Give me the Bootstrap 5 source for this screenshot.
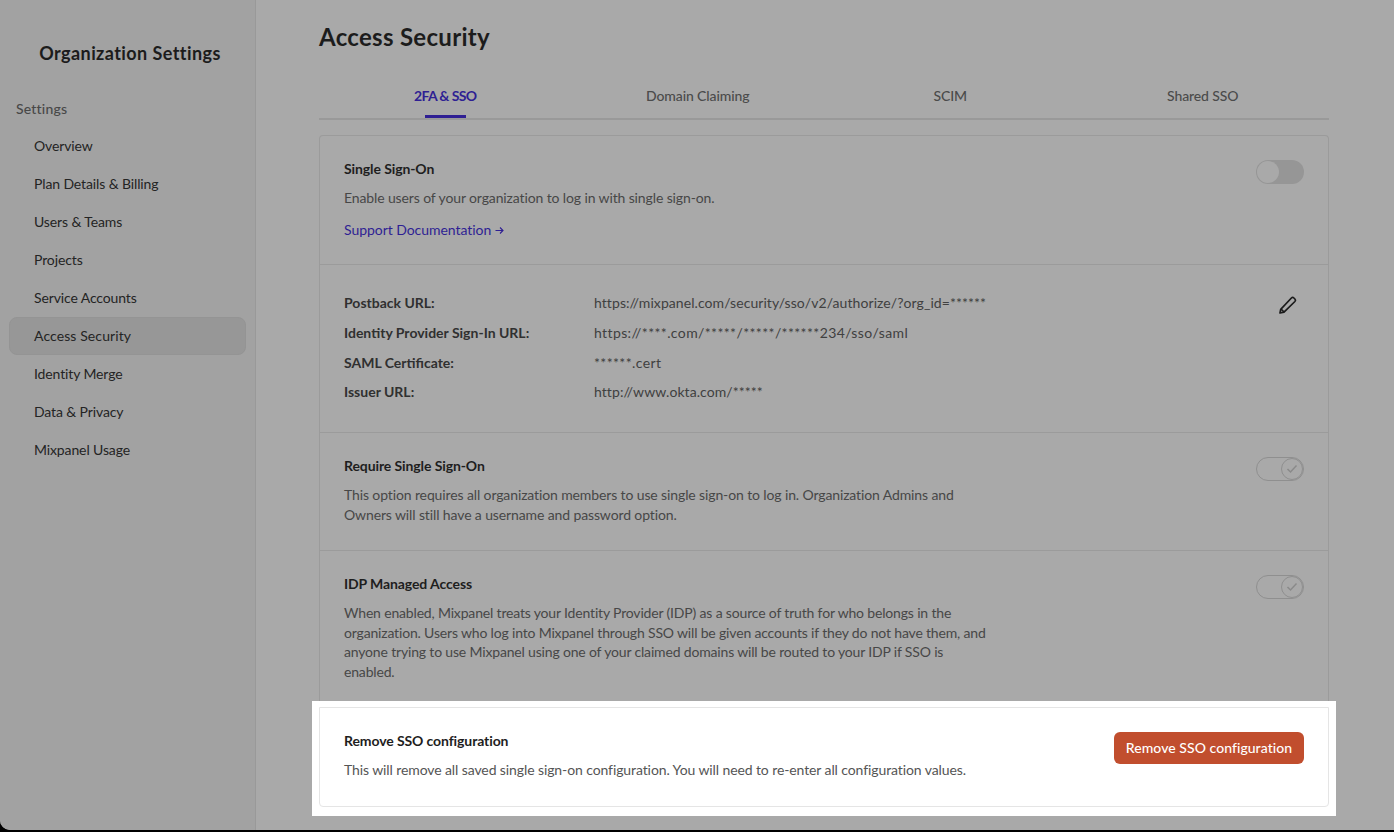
<!DOCTYPE html>
<html lang="en"><head><meta charset="utf-8"><title>Access Security</title>
<link href="https://cdn.jsdelivr.net/npm/bootstrap@5.3.0/dist/css/bootstrap.min.css" rel="stylesheet">
<style>
html,body{height:100%;overflow:hidden;background:#000}
body{font-family:"Lato","Noto Sans",sans-serif;font-size:14px;color:#1b1b1b}
.shell{height:830px;background:#a9a9a9;border-bottom-left-radius:10px;overflow:hidden}
.side{width:256px;flex:none;background:#a2a2a2;border-right:1px solid #999;padding:42px 9px 0 9px}
.side-title{font-size:18px;font-weight:700;text-align:center;line-height:22px;margin:0 0 34px;color:#1c1c1c;padding-left:5px;letter-spacing:.42px}
.side-head{color:#484848;font-weight:500;line-height:22px;margin-bottom:7px;padding-left:7px;letter-spacing:.2px}
.side-link{display:block;height:38px;line-height:38px;padding-left:25px;color:#242424;text-decoration:none;border-radius:8px;letter-spacing:-.12px}
.side-link.on{background:#979797;border:1px solid #949494;line-height:36px;padding-left:24px;letter-spacing:.1px}
.main-col{padding:0 65px 0 63px;min-width:0;flex:1}
.page-title{font-size:24px;font-weight:700;line-height:30px;margin:22px 0 0;color:#1c1c1c;letter-spacing:.3px}
.tabs{border-bottom:2px solid #999;margin-top:30px;height:38px}
.tab-item{flex:1;text-align:center}
.tab-link{display:inline-block;padding:0;height:37px;line-height:28px;color:#4b4b4b;font-weight:500;text-decoration:none;letter-spacing:-.1px}
.tab-link.on{color:#2f1f93;font-weight:700;position:relative;letter-spacing:-.6px}
.tab-link.on::after{content:"";position:absolute;left:11px;right:11px;bottom:1px;height:3px;background:#2f1f93}
.box{margin-top:15px;border:1px solid #9b9b9b;border-bottom:0;border-radius:4px 4px 0 0}
.sect{padding:0 24px;border-bottom:1px solid #9b9b9b}
.s1{height:129px;padding-top:22px}.s2{height:168px;padding-top:28.3px}.s3{height:118px;padding-top:22px}.s4{height:150px;padding-top:22px;border-bottom:0}
.h-line{font-weight:700;line-height:22px;color:#1e1e1e;letter-spacing:-.1px}
.txt{color:#474747;line-height:20px;max-width:650px;margin-top:8px;letter-spacing:-.12px}
.s4 .txt{letter-spacing:-.17px;line-height:19.7px}
.docs{color:#2f1f93;text-decoration:none;display:inline-block;margin-top:11px;line-height:22px;letter-spacing:-.05px}
.docs svg{margin-left:4px;vertical-align:0}
.kv{line-height:20px;margin-bottom:9.7px}
.kv-k{width:250px;flex:none;font-weight:700;color:#303030}
.kv-v{color:#404040;letter-spacing:.07px}
.kv-v.wide{letter-spacing:.39px}
.tgl{width:48px;height:24px;border-radius:12px;flex:none;position:relative;margin-top:2px}
.tgl-off{background:#969696}
.tgl-off::after{content:"";position:absolute;left:1px;top:1px;width:22px;height:22px;border-radius:50%;background:#a9a9a9}
.tgl-on{border:1px solid #8f8f8f}
.tgl-knob{position:absolute;right:0;top:0;width:22px;height:22px;border-radius:50%;border:1px solid #8f8f8f;display:flex;align-items:center;justify-content:center}
.pen-ico{margin:2px 6px 0 0;flex:none}
.spot{background:#fff;margin:0 -7px;padding:6px 7px 9px}
.spot-in{border:1px solid #e5e5e5;border-radius:0 0 4px 4px;height:100px;padding:22px 24px 0}
.spot-txt{color:#555;line-height:20px;margin-top:8px;letter-spacing:-.1px}
.btn-rm{background:#c14e2e;color:#fff;font-weight:500;border:0;border-radius:6px;height:32px;padding:0;line-height:28px;font-size:14px;margin-top:2px;letter-spacing:.05px;width:190px;white-space:nowrap;flex:none}
.btn-rm:hover{background:#c14e2e;color:#fff}
</style></head>
<body>
<div class="shell d-flex">
  <aside class="side">
    <h1 class="side-title">Organization Settings</h1>
    <div class="side-head">Settings</div>
    <nav>
      <a class="side-link" href="#">Overview</a>
      <a class="side-link" href="#">Plan Details &amp; Billing</a>
      <a class="side-link" href="#">Users &amp; Teams</a>
      <a class="side-link" href="#">Projects</a>
      <a class="side-link" href="#">Service Accounts</a>
      <a class="side-link on" href="#">Access Security</a>
      <a class="side-link" href="#">Identity Merge</a>
      <a class="side-link" href="#">Data &amp; Privacy</a>
      <a class="side-link" href="#">Mixpanel Usage</a>
    </nav>
  </aside>
  <main class="main-col">
    <h2 class="page-title">Access Security</h2>
    <ul class="nav tabs">
      <li class="tab-item"><a class="tab-link on" href="#">2FA &amp; SSO</a></li>
      <li class="tab-item"><a class="tab-link" href="#">Domain Claiming</a></li>
      <li class="tab-item"><a class="tab-link" href="#">SCIM</a></li>
      <li class="tab-item"><a class="tab-link" href="#">Shared SSO</a></li>
    </ul>
    <div class="box">
      <section class="sect s1 d-flex justify-content-between align-items-start">
        <div>
          <div class="h-line">Single Sign-On</div>
          <div class="txt">Enable users of your organization to log in with single sign-on.</div>
          <a class="docs" href="#">Support Documentation<svg width="9" height="9" viewBox="0 0 9 9" fill="none" stroke="#2f1f93" stroke-width="1.1"><path d="M.5 4.5h7.5M5 1.5l3 3-3 3"/></svg></a>
        </div>
        <div class="tgl tgl-off"></div>
      </section>
      <section class="sect s2 d-flex justify-content-between align-items-start">
        <div>
          <div class="kv d-flex"><div class="kv-k">Postback URL:</div><div class="kv-v">https://mixpanel.com/security/sso/v2/authorize/?org_id=******</div></div>
          <div class="kv d-flex"><div class="kv-k">Identity Provider Sign-In URL:</div><div class="kv-v wide">https://****.com/*****/*****/******234/sso/saml</div></div>
          <div class="kv d-flex"><div class="kv-k">SAML Certificate:</div><div class="kv-v wide">******.cert</div></div>
          <div class="kv d-flex"><div class="kv-k">Issuer URL:</div><div class="kv-v">http://www.okta.com/*****</div></div>
        </div>
        <svg class="pen-ico" width="20" height="20" viewBox="0 0 20 20" fill="none" stroke="#1b1b1b" stroke-width="1.7" stroke-linejoin="round"><path d="M2 18l.7-3.7L13.4 3a1.8 1.8 0 0 1 2.5 0l1 1a1.8 1.8 0 0 1 0 2.5L6 17.2z"/><path d="M3 14l3 3"/></svg>
      </section>
      <section class="sect s3 d-flex justify-content-between align-items-start">
        <div>
          <div class="h-line">Require Single Sign-On</div>
          <div class="txt">This option requires all organization members to use single sign-on to log in. Organization Admins and Owners will still have a username and password option.</div>
        </div>
        <div class="tgl tgl-on"><span class="tgl-knob"><svg width="12" height="10" viewBox="0 0 12 10" fill="none" stroke="#8a8a8a" stroke-width="1.5"><path d="M1.5 5l3 3 6-6.5"/></svg></span></div>
      </section>
      <section class="sect s4 d-flex justify-content-between align-items-start">
        <div>
          <div class="h-line">IDP Managed Access</div>
          <div class="txt">When enabled, Mixpanel treats your Identity Provider (IDP) as a source of truth for who belongs in the organization. Users who log into Mixpanel through SSO will be given accounts if they do not have them, and anyone trying to use Mixpanel using one of your claimed domains will be routed to your IDP if SSO is enabled.</div>
        </div>
        <div class="tgl tgl-on"><span class="tgl-knob"><svg width="12" height="10" viewBox="0 0 12 10" fill="none" stroke="#8a8a8a" stroke-width="1.5"><path d="M1.5 5l3 3 6-6.5"/></svg></span></div>
      </section>
    </div>
    <div class="spot">
      <div class="spot-in d-flex justify-content-between align-items-start">
        <div>
          <div class="h-line">Remove SSO configuration</div>
          <div class="spot-txt">This will remove all saved single sign-on configuration. You will need to re-enter all configuration values.</div>
        </div>
        <button class="btn btn-rm" type="button">Remove SSO configuration</button>
      </div>
    </div>
  </main>
</div>
<script src="https://cdn.jsdelivr.net/npm/bootstrap@5.3.0/dist/js/bootstrap.bundle.min.js"></script>
</body></html>
